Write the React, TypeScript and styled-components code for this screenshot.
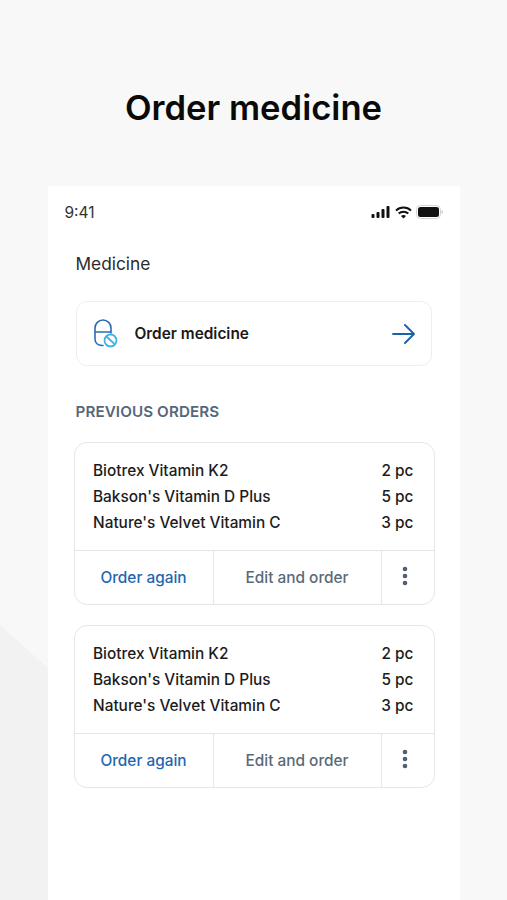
import React from 'react';
import styled, { createGlobalStyle } from 'styled-components';

const GlobalStyle = createGlobalStyle`
    html, body {
        margin: 0;
        padding: 0;
        background: #f8f8f8;
    }
    * {
        box-sizing: border-box;
    }
`;

const Page = styled.div`
    position: relative;
    width: 507px;
    height: 900px;
    overflow: hidden;
    background: #f8f8f8;
    font-family: Inter, "Liberation Sans", sans-serif;
    display: flex;
    flex-direction: column;
    align-items: center;

    &::before {
        content: "";
        position: absolute;
        inset: 0;
        background: #f2f2f2;
        clip-path: polygon(0 625px, 48px 668px, 48px 900px, 0 900px);
    }
`;

const Title = styled.h1`
    margin: 0;
    height: 186px;
    padding-top: 86px;
    font-size: 34.6px;
    line-height: 42px;
    font-weight: 600;
    color: #0a0a0a;
    position: relative;
`;

const Phone = styled.div`
    position: relative;
    width: 412px;
    height: 714px;
    background: #fff;
    display: flex;
    flex-direction: column;
`;

const StatusBar = styled.div`
    height: 66px;
    padding: 16px 17px 0;
    display: flex;
    justify-content: space-between;
    align-items: flex-start;
`;

const Clock = styled.span`
    margin-top: 1px;
    font-size: 15.5px;
    line-height: 20px;
    color: #333;
`;

const StatusIcons = styled.div`
    display: flex;
    align-items: center;
    gap: 4px;
    height: 20px;
`;

const Content = styled.div`
    padding: 0 26px;
    display: flex;
    flex-direction: column;
`;

const Heading = styled.h2`
    margin: 0 0 25px 2px;
    font-size: 17.3px;
    line-height: 24px;
    font-weight: 400;
    color: #2b2b2b;
`;

const OrderCard = styled.div`
    margin: 0 2px;
    width: 356px;
    height: 65px;
    border: 1px solid #eeeeee;
    border-radius: 11px;
    padding: 0 16px 0 16px;
    display: flex;
    align-items: center;
`;

const OrderLabel = styled.span`
    margin-left: 12px;
    flex: 1;
    font-size: 15.4px;
    font-weight: 600;
    color: #1a1a1a;
`;

const SectionTitle = styled.h3`
    margin: 36px 0 20px 2px;
    font-size: 15.2px;
    line-height: 20px;
    font-weight: 600;
    letter-spacing: 0.1px;
    color: #566779;
    text-transform: uppercase;
`;

const Orders = styled.div`
    display: flex;
    flex-direction: column;
    gap: 20px;
`;

const Card = styled.div`
    width: 361px;
    height: 163px;
    border: 1.5px solid #e6e6e6;
    border-radius: 13px;
    display: flex;
    flex-direction: column;
    overflow: hidden;
`;

const Items = styled.div`
    height: 107px;
    padding: 18px 20px 0 18.5px;
    display: flex;
    flex-direction: column;
    gap: 6px;
`;

const ItemRow = styled.div`
    display: flex;
    justify-content: space-between;
    font-size: 15.4px;
    font-weight: 500;
    line-height: 20px;
    color: #1c1c1c;
`;

const Actions = styled.div`
    flex: 1;
    display: grid;
    grid-template-columns: 138px 168px 1fr;
    border-top: 1.5px solid #e6e6e6;
`;

const Action = styled.div<{ $tone: 'blue' | 'grey' }>`
    display: flex;
    align-items: center;
    justify-content: center;
    padding-bottom: 1px;
    font-size: 15.4px;
    font-weight: 500;
    color: ${(p) => (p.$tone === 'blue' ? '#1f66b0' : '#5a6a79')};

    & + & {
        border-left: 1.5px solid #e6e6e6;
    }
`;

const MoreAction = styled(Action)`
    padding: 0 5px 4px 0;
`;

const PillIcon = () => (
    <svg width="30" height="30" viewBox="0 0 30 30" fill="none">
        <path
            d="M10 26.5H9C5 26.5 2 24 2 20V9C2 4.5 5.5 1 10 1C14.5 1 18 4.5 18 9V14M2 13H18"
            stroke="#2a6cb3"
            strokeWidth="1.6"
            strokeLinecap="round"
        />
        <circle cx="17.5" cy="21.5" r="6" stroke="#3db5ea" strokeWidth="1.8" fill="#fff" />
        <path d="M13.5 17.5L21.5 25" stroke="#3db5ea" strokeWidth="1.8" />
    </svg>
);

const ArrowIcon = () => (
    <svg width="24" height="24" viewBox="0 0 24 24" fill="none">
        <path
            d="M2 12H23M14 3L23 12L14 21"
            stroke="#1c62a8"
            strokeWidth="1.9"
            strokeLinecap="round"
            strokeLinejoin="round"
        />
    </svg>
);

const SignalIcon = () => (
    <svg width="20" height="12" viewBox="0 0 20 12" fill="#111">
        <rect x="0.5" y="8" width="3" height="4" rx="1" />
        <rect x="5.5" y="6" width="3" height="6" rx="1" />
        <rect x="10.5" y="3" width="3" height="9" rx="1" />
        <rect x="15.5" y="0" width="3" height="12" rx="1" />
    </svg>
);

const WifiIcon = () => (
    <svg width="17" height="13" viewBox="0 0 17 13" fill="none" stroke="#111" strokeWidth="2">
        <path d="M1 4.6C5.2 0.6 11.8 0.6 16 4.6" />
        <path d="M3.7 7.5C6.4 5 10.6 5 13.3 7.5" />
        <path d="M8.5 12.5L6 10C7.4 8.8 9.6 8.8 11 10Z" fill="#111" stroke="none" />
    </svg>
);

const BatteryIcon = () => (
    <svg width="27" height="14" viewBox="0 0 27 14" fill="none">
        <rect x="0.5" y="0.5" width="24" height="13" rx="4" stroke="#d4d4d4" />
        <rect x="2" y="2" width="21" height="10" rx="2.5" fill="#111" />
        <path d="M25.5 5V9C26.4 8.7 27 7.9 27 7C27 6.1 26.4 5.3 25.5 5Z" fill="#c8c8c8" />
    </svg>
);

const DotsIcon = () => (
    <svg width="6" height="20" viewBox="0 0 6 20" fill="#4f5f6f">
        <circle cx="3" cy="3" r="2.3" />
        <circle cx="3" cy="10" r="2.3" />
        <circle cx="3" cy="17" r="2.3" />
    </svg>
);

const items = [
    { name: 'Biotrex Vitamin K2', qty: '2 pc' },
    { name: "Bakson's Vitamin D Plus", qty: '5 pc' },
    { name: "Nature's Velvet Vitamin C", qty: '3 pc' },
];

const PreviousOrder: React.FC = () => (
    <Card>
        <Items>
            {items.map((item) => (
                <ItemRow key={item.name}>
                    <span>{item.name}</span>
                    <span>{item.qty}</span>
                </ItemRow>
            ))}
        </Items>
        <Actions>
            <Action $tone="blue">Order again</Action>
            <Action $tone="grey">Edit and order</Action>
            <MoreAction $tone="grey">
                <DotsIcon />
            </MoreAction>
        </Actions>
    </Card>
);

const App: React.FC = () => {
    return (
        <Page>
            <GlobalStyle />
            <Title>Order medicine</Title>
            <Phone>
                <StatusBar>
                    <Clock>9:41</Clock>
                    <StatusIcons>
                        <SignalIcon />
                        <WifiIcon />
                        <BatteryIcon />
                    </StatusIcons>
                </StatusBar>
                <Content>
                    <Heading>Medicine</Heading>
                    <OrderCard>
                        <PillIcon />
                        <OrderLabel>Order medicine</OrderLabel>
                        <ArrowIcon />
                    </OrderCard>
                    <SectionTitle>Previous orders</SectionTitle>
                    <Orders>
                        <PreviousOrder />
                        <PreviousOrder />
                    </Orders>
                </Content>
            </Phone>
        </Page>
    );
};

export default App;
